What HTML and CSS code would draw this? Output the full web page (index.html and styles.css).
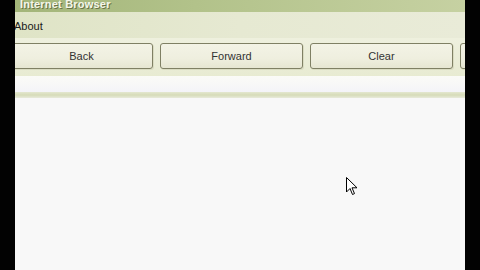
FILE: index.html
```html
<!DOCTYPE html>
<html>
<head>
<meta charset="utf-8">
<link rel="stylesheet" href="styles.css">
</head>
<body>
<div class="screen">
  <div class="edge"></div>
  <div class="window">
    <div class="titlebar"><span class="title">Internet Browser</span></div>
    <div class="menubar"><span class="menu-item">About</span></div>
    <div class="toolbar">
      <div class="btn btn-cut">Back</div>
      <div class="btn">Forward</div>
      <div class="btn">Clear</div>
      <div class="btn btn-tail"></div>
    </div>
    <div class="addressbar"></div>
    <div class="divider"></div>
    <div class="content">
      <svg class="cursor" width="12" height="19" viewBox="0 0 12 19">
        <path d="M0.5 0.5 L0.5 15 L4 11.5 L6.5 17.5 L8.5 16.6 L6 10.8 L11 10.8 Z" fill="#fff" stroke="#000" stroke-width="1"/>
      </svg>
    </div>
  </div>
  <div class="edge"></div>
</div>
</body>
</html>
```
FILE: styles.css
```css
html, body {
  margin: 0;
  padding: 0;
  width: 480px;
  height: 270px;
  overflow: hidden;
  background: #000;
}
.screen {
  display: flex;
  width: 480px;
  height: 270px;
}
.edge {
  width: 15px;
  background: #020202;
  flex: none;
}
.window {
  width: 450px;
  display: flex;
  flex-direction: column;
  overflow: hidden;
  font-family: "Liberation Sans", Arial, sans-serif;
}
.titlebar {
  height: 12px;
  background: linear-gradient(90deg, #a3b579 0%, #b2c28a 40%, #c6d1a2 100%);
  position: relative;
  overflow: hidden;
}
.title {
  position: absolute;
  left: 5px;
  top: -2px;
  font-size: 11px;
  line-height: 12px;
  font-weight: bold;
  color: #f4f6ea;
  text-shadow: 1px 1px 0 #6a7448;
  letter-spacing: 0.2px;
}
.menubar {
  height: 26px;
  background: linear-gradient(90deg, #dfe4c6 0%, #e6e9d2 50%, #e9ebd8 100%);
  display: flex;
  align-items: center;
}
.menu-item {
  font-size: 11px;
  color: #1a1a1a;
  margin-left: -1px;
  margin-top: 1px;
}
.toolbar {
  height: 38px;
  background: linear-gradient(180deg, #eef0de 0%, #e8ebd2 100%);
  display: flex;
  gap: 7px;
  padding-top: 5px;
  box-sizing: border-box;
}
.btn {
  flex: none;
  width: 141px;
  height: 24px;
  border: 1px solid #7f8064;
  border-radius: 3px;
  background: linear-gradient(180deg, #f3f3e6 0%, #efefdf 60%, #e6e6d2 100%);
  box-shadow: 1px 1px 0 #dadcc2;
  font-size: 11px;
  color: #333;
  display: flex;
  align-items: center;
  justify-content: center;
}
.btn-cut {
  margin-left: -5px;
}
.btn-tail {
  width: 20px;
}
.addressbar {
  height: 16px;
  background: linear-gradient(180deg, #fbfbf7 0%, #f4f4f8 100%);
}
.divider {
  height: 6px;
  background: linear-gradient(180deg, #e4e7d0 0%, #d6dcb8 50%, #e8eadb 100%);
}
.content {
  flex: 1;
  background: #f8f8f8;
  position: relative;
}
.cursor {
  position: absolute;
  left: 331px;
  top: 79px;
}
```
